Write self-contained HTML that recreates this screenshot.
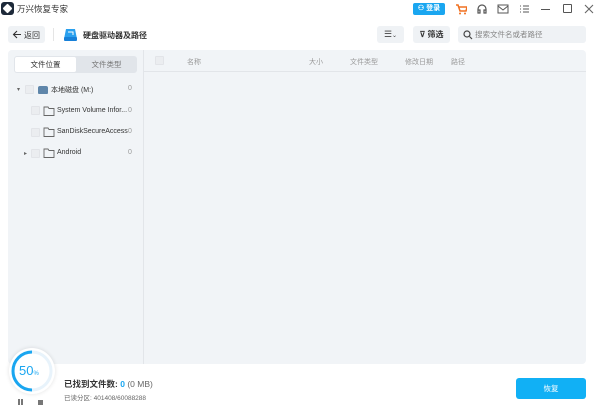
<!DOCTYPE html>
<html><head><meta charset="utf-8"><style>
*{margin:0;padding:0;box-sizing:border-box}
body{width:600px;height:409px;background:#fff;font-family:"Liberation Sans","Noto Sans CJK SC",sans-serif;position:relative;overflow:hidden;color:#333}
.a{position:absolute}
.t{font-size:8px;color:#333;white-space:nowrap}
.g{font-size:7px;color:#999;white-space:nowrap}
.cb{width:9px;height:9px;background:#ebedf0;border:1px solid #e2e4e8;border-radius:1px}
</style></head><body>
<div class="a" style="left:1px;top:2px;width:13px;height:13px;background:#1e2a3a;border-radius:3px"></div>
<div class="a" style="left:4px;top:5px;width:7px;height:7px;background:#fff;transform:rotate(45deg);border-radius:1px"></div>
<div class="a t" style="left:17px;top:3px;font-size:8.5px">万兴恢复专家</div>
<div class="a" style="left:413px;top:3px;width:32px;height:12px;background:#1aa6f0;border-radius:2px;color:#fff;font-size:7px;line-height:12px;text-align:center;font-weight:bold">⚇ 登录</div>
<svg class="a" style="left:455px;top:4px" width="12" height="11"><path d="M1 1h2l2 6h6l1-4H4" stroke="#f07020" stroke-width="1.5" fill="none"/><circle cx="5" cy="9.5" r="1" fill="#f07020"/><circle cx="10" cy="9.5" r="1" fill="#f07020"/></svg>
<svg class="a" style="left:476px;top:3px" width="12" height="12"><path d="M2 7V6a4 4 0 018 0v1M2 7h2v3H2zM8 7h2v3H8z" stroke="#555" stroke-width="1.2" fill="none"/></svg>
<svg class="a" style="left:497px;top:4px" width="12" height="10"><rect x="1" y="1" width="10" height="8" stroke="#555" fill="none"/><path d="M1 2l5 4 5-4" stroke="#555" fill="none"/></svg>
<svg class="a" style="left:519px;top:4px" width="11" height="10"><path d="M1 2h1M4 2h6M1 5h1M4 5h6M1 8h1M4 8h6" stroke="#555"/></svg>
<div class="a" style="left:541px;top:9px;width:9px;height:1px;background:#555"></div>
<div class="a" style="left:563px;top:4px;width:9px;height:9px;border:1.2px solid #555;border-radius:1px"></div>
<svg class="a" style="left:584px;top:4px" width="10" height="10"><path d="M1 1l8 8M9 1l-8 8" stroke="#666" stroke-width="1.1"/></svg>
<div class="a" style="left:8px;top:26px;width:37px;height:17px;background:#eff2f5;border-radius:3px"></div>
<svg class="a" style="left:12px;top:30px" width="10" height="9"><path d="M9 4.5H2M5 1L1.5 4.5 5 8" stroke="#333" stroke-width="1.1" fill="none"/></svg>
<div class="a t" style="left:24px;top:30px;font-size:8px">返回</div>
<div class="a" style="left:53px;top:28px;width:1px;height:13px;background:#e5e5e5"></div>
<svg class="a" style="left:63px;top:27px" width="15" height="15"><path d="M3 2h9l2 10H1z" fill="#2aa0ee"/><rect x="1" y="10" width="13" height="4" rx="1" fill="#1780d8"/><path d="M5 5h5v3" stroke="#fff" fill="none"/></svg>
<div class="a t" style="left:83px;top:30px;font-weight:bold;font-size:8px">硬盘驱动器及路径</div>
<div class="a" style="left:377px;top:26px;width:27px;height:17px;background:#eff2f5;border-radius:3px;font-size:9px;line-height:17px;text-align:center;color:#444">☰<span style="font-size:6px">⌄</span></div>
<div class="a" style="left:413px;top:26px;width:37px;height:17px;background:#eff2f5;border-radius:3px;font-size:8px;line-height:17px;text-align:center;font-weight:bold">⊽ 筛选</div>
<div class="a" style="left:458px;top:26px;width:128px;height:17px;background:#eff2f5;border-radius:3px;font-size:7.5px;line-height:17px;padding-left:17px;color:#888">搜索文件名或者路径</div>
<svg class="a" style="left:463px;top:30px" width="10" height="10"><circle cx="4" cy="4" r="3" stroke="#444" fill="none" stroke-width="1.2"/><path d="M6.5 6.5l2.5 2.5" stroke="#444" stroke-width="1.2"/></svg>
<div class="a" style="left:8px;top:50px;width:578px;height:314px;background:#f1f4f7;border-radius:4px"></div>
<div class="a" style="left:143px;top:50px;width:1px;height:314px;background:#e2e5e9"></div>
<div class="a" style="left:144px;top:71px;width:442px;height:1px;background:#e2e5e9"></div>
<div class="a" style="left:14px;top:56px;width:123px;height:17px;background:#e1e5ea;border-radius:3px"></div>
<div class="a" style="left:15px;top:57px;width:61px;height:15px;background:#fff;border-radius:2px;font-size:7.5px;line-height:15px;text-align:center">文件位置</div>
<div class="a g" style="left:76px;top:57px;width:61px;line-height:15px;text-align:center;font-size:7.5px;color:#777">文件类型</div>
<div class="a g" style="left:17px;top:86px;font-size:6px;color:#666">▾</div>
<div class="a cb" style="left:25px;top:85px"></div>
<div class="a" style="left:38px;top:86px;width:10px;height:8px;background:#5f86aa;border-radius:2px 2px 1px 1px"></div>
<div class="a t" style="left:51px;top:85px;font-size:7px">本地磁盘 (M:)</div>
<div class="a g" style="left:128px;top:85px">0</div>
<div class="a cb" style="left:31px;top:106px"></div>
<div class="a t" style="left:57px;top:107px;font-size:7px">System Volume Infor...</div>
<div class="a g" style="left:128px;top:107px">0</div>
<div class="a cb" style="left:31px;top:128px"></div>
<div class="a t" style="left:57px;top:128px;font-size:7px">SanDiskSecureAccess</div>
<div class="a g" style="left:128px;top:128px">0</div>
<div class="a g" style="left:24px;top:150px;font-size:6px;color:#666">▸</div>
<div class="a cb" style="left:31px;top:149px"></div>
<div class="a t" style="left:57px;top:149px;font-size:7px">Android</div>
<div class="a g" style="left:128px;top:149px">0</div>
<svg class="a" style="left:43px;top:105px" width="12" height="60"><path d="M1 2h4l1 1.5h5v7H1z M1 23h4l1 1.5h5v7H1z M1 44h4l1 1.5h5v7H1z" stroke="#666" fill="none" stroke-width=".9"/></svg>
<div class="a cb" style="left:155px;top:56px"></div>
<div class="a g" style="left:187px;top:57px">名称</div>
<div class="a g" style="left:309px;top:57px">大小</div>
<div class="a g" style="left:350px;top:57px">文件类型</div>
<div class="a g" style="left:405px;top:57px">修改日期</div>
<div class="a g" style="left:451px;top:57px">路径</div>
<div class="a" style="left:9px;top:348px;width:46px;height:46px;border-radius:50%;background:#fff;box-shadow:0 0 4px rgba(0,0,0,.12)"></div>
<svg class="a" style="left:9px;top:348px" width="46" height="46"><circle cx="23" cy="23" r="19" stroke="#e8f3fb" stroke-width="3" fill="none"/><path d="M23 4A19 19 0 0 0 23 42" stroke="#1aa6f0" stroke-width="3" fill="none"/></svg>
<div class="a" style="left:19px;top:363px;font-size:13px;color:#1aa6f0">50<span style="font-size:6px">%</span></div>
<div class="a" style="left:18px;top:399px;width:2px;height:6px;background:#777"></div>
<div class="a" style="left:21px;top:399px;width:2px;height:6px;background:#777"></div>
<div class="a" style="left:38px;top:400px;width:5px;height:5px;background:#777"></div>
<div class="a" style="left:64px;top:378px;font-size:8.5px;font-weight:bold">已找到文件数: <span style="color:#1aa6f0">0</span> <span style="font-weight:normal;color:#666">(0 MB)</span></div>
<div class="a" style="left:64px;top:392px;font-size:6.5px;color:#666">已读分区: 401408/60088288</div>
<div class="a" style="left:516px;top:378px;width:70px;height:21px;background:#11b0f5;border-radius:3px;color:#fff;font-size:7.5px;line-height:21px;text-align:center">恢复</div>
</body></html>
